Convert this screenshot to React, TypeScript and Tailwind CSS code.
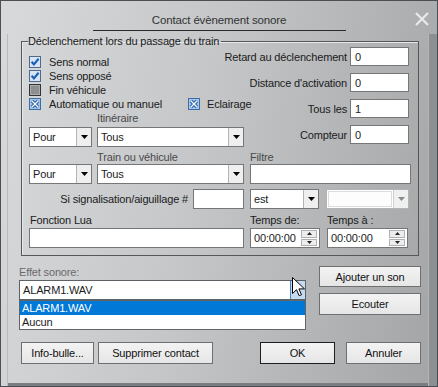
import clsx from "clsx";

function Arrow({ color = "#000" }: { color?: string }) {
  return (
    <svg width="7" height="4" viewBox="0 0 7 4">
      <path d="M0 0h7L3.5 4z" fill={color} />
    </svg>
  );
}

function Check({ kind }: { kind: "check" | "off" | "x" }) {
  if (kind === "check")
    return (
      <svg width="12" height="12" viewBox="0 0 12 12" className="shrink-0">
        <rect x="0.5" y="0.5" width="11" height="11" fill="#d6e4f4" stroke="#4f6a8a" />
        <path d="M2.6 5.8l2.3 2.6L9.6 2.8" stroke="#1a5fb4" strokeWidth="2.1" fill="none" />
      </svg>
    );
  if (kind === "off")
    return (
      <svg width="12" height="12" viewBox="0 0 12 12" className="shrink-0">
        <rect x="0.5" y="0.5" width="11" height="11" fill="#8d8f91" stroke="#333537" />
        <rect x="1.5" y="1.5" width="9" height="9" fill="none" stroke="#a9abad" />
      </svg>
    );
  return (
    <svg width="12" height="12" viewBox="0 0 12 12" className="shrink-0">
      <rect x="0.5" y="0.5" width="11" height="11" fill="#a9c6ea" stroke="#3b6da6" />
      <path d="M3 3l6 6M9 3l-6 6" stroke="#1d5ca8" strokeWidth="3.2" />
      <path d="M3 3l6 6M9 3l-6 6" stroke="#fff" strokeWidth="1.3" />
    </svg>
  );
}

function CheckRow({ kind, label }: { kind: "check" | "off" | "x"; label: string }) {
  return (
    <div className="flex items-center h-[14px]">
      <Check kind={kind} />
      <span className="ml-[8px] leading-[14px]">{label}</span>
    </div>
  );
}

function Combo({
  className,
  text,
  disabled,
}: {
  className: string;
  text?: string;
  disabled?: boolean;
}) {
  return (
    <div
      className={clsx(
        "flex h-full border bg-white",
        disabled ? "border-[#b3b3b3]" : "border-[#767676]",
        className
      )}
    >
      {disabled ? (
        <div className="flex-1 m-[1px] border border-[#dcdcdc] bg-[#fdfdfd]" />
      ) : (
        <div className="flex-1 pl-[3px] leading-[18px] truncate">{text}</div>
      )}
      <div
        className={clsx(
          "w-[15px] flex items-center justify-center border-l",
          disabled ? "border-[#d0d0d0] bg-[#f0f0f0]" : "border-[#b4b4b4] bg-[#efefef]"
        )}
      >
        <Arrow color={disabled ? "#8a8a8a" : "#000"} />
      </div>
    </div>
  );
}

function Field({ className, value }: { className: string; value?: string }) {
  return (
    <div className={clsx("h-full border border-[#767676] bg-white pl-[4px] leading-[18px]", className)}>
      {value}
    </div>
  );
}

function TimeField({ className }: { className: string }) {
  return (
    <div className={clsx("h-full flex border border-[#767676] bg-white", className)}>
      <div className="flex-1 pl-[3px] leading-[18px]">00:00:00</div>
      <div className="w-[16px] my-[1px] mr-[2px] flex flex-col gap-px">
        <div className="flex-1 flex items-center justify-center border border-[#b0b0b0] bg-[#ededed]">
          <svg width="5" height="3" viewBox="0 0 5 3">
            <path d="M0 3h5L2.5 0z" fill="#222" />
          </svg>
        </div>
        <div className="flex-1 flex items-center justify-center border border-[#b0b0b0] bg-[#ededed]">
          <svg width="5" height="3" viewBox="0 0 5 3">
            <path d="M0 0h5L2.5 3z" fill="#222" />
          </svg>
        </div>
      </div>
    </div>
  );
}

function Btn({ className, label }: { className: string; label: string }) {
  return (
    <button
      className={clsx(
        "border bg-[linear-gradient(#f3f3f3,#e6e6e6)] text-center leading-[18px] text-[#111]",
        className
      )}
    >
      {label}
    </button>
  );
}

function RightRow({ label, value }: { label: string; value: string }) {
  return (
    <div className="flex items-center justify-end gap-[3px] h-[19px] pr-[2px]">
      <span className="leading-[14px] whitespace-nowrap">{label}</span>
      <Field className="w-[59px]" value={value} />
    </div>
  );
}

export default function App() {
  return (
    <div className="w-[438px] h-[387px] flex flex-col border border-[#4b4e52] bg-[linear-gradient(100deg,#d7d9db_0%,#c4c6c8_45%,#a2a4a6_100%)] font-['Liberation_Sans',Arial,sans-serif] text-[11px] tracking-[-0.15px] text-[#1b1b1b] overflow-hidden">
      {/* Titre */}
      <div className="h-[33px] grid grid-cols-[1fr_auto_1fr]">
        <div />
        <div className="mt-[11px] w-[253px] h-[19px] border-b border-[#2b2b2b] text-center text-[11.5px] leading-[17px] text-[#333]">
          Contact évènement sonore
        </div>
        <div className="flex justify-end pt-[10px] pr-[7px]">
          <svg width="16" height="16" viewBox="0 0 16 16">
            <path d="M2 2l12 12M14 2L2 14" stroke="#e8e9ea" strokeWidth="2.2" />
          </svg>
        </div>
      </div>

      <div className="flex-1 flex">
        <div className="flex-1 flex flex-col ml-[6px] border-l border-[#b9bbbd]">
          {/* Groupe déclenchement */}
          <fieldset className="ml-[13px] w-[398px] border border-[#55585b] px-[7px] pb-[7px] shadow-[inset_1px_1px_0_#e6e8ea]">
            <legend className="-ml-px pr-[2px] leading-[14px]">Déclenchement lors du passage du train</legend>

            <div className="grid grid-cols-[181px_201px]">
              <div className="flex flex-col">
                <div className="mt-[7px] flex flex-col">
                  <CheckRow kind="check" label="Sens normal" />
                  <CheckRow kind="check" label="Sens opposé" />
                  <CheckRow kind="off" label="Fin véhicule" />
                  <div className="grid grid-cols-[159px_12px_max-content] items-center h-[14px] w-max whitespace-nowrap">
                    <div className="flex items-center">
                      <Check kind="x" />
                      <span className="ml-[8px] leading-[14px]">Automatique ou manuel</span>
                    </div>
                    <Check kind="x" />
                    <span className="ml-[7px] leading-[14px]">Eclairage</span>
                  </div>
                </div>
                <div className="h-[14px] pl-[68px] leading-[14px] text-[#4a4a4a]">Itinéraire</div>
                <div className="mt-[2px] h-[20px] w-[215px] grid grid-cols-[63px_147px] gap-[5px]">
                  <Combo className="" text="Pour" />
                  <Combo className="" text="Tous" />
                </div>
              </div>

              <div className="-mt-px flex flex-col gap-[7px]">
                <RightRow label="Retard au déclenchement" value="0" />
                <RightRow label="Distance d'activation" value="0" />
                <RightRow label="Tous les" value="1" />
                <RightRow label="Compteur" value="0" />
              </div>
            </div>

            <div className="mt-[3px] h-[14px] flex leading-[14px]">
              <div className="w-[221px] pl-[68px] text-[#4a4a4a]">Train ou véhicule</div>
              <div className="text-[#4a4a4a]">Filtre</div>
            </div>
            <div className="h-[20px] flex">
              <Combo className="w-[63px]" text="Pour" />
              <Combo className="w-[147px] ml-[5px]" text="Tous" />
              <Field className="w-[161px] ml-[6px]" />
            </div>

            <div className="mt-[5px] h-[20px] flex items-center">
              <div className="w-[159px] text-right leading-[14px] whitespace-nowrap">Si signalisation/aiguillage #</div>
              <Field className="w-[51px] ml-[5px]" />
              <Combo className="w-[69px] ml-[6px]" text="est" />
              <Combo className="w-[83px] ml-[7px]" disabled />
            </div>

            <div className="mt-[4px] h-[14px] flex leading-[14px]">
              <div className="w-[221px] pl-px">Fonction Lua</div>
              <div className="w-[77px]">Temps de:</div>
              <div>Temps à :</div>
            </div>
            <div className="mt-px h-[20px] flex">
              <Field className="w-[215px]" />
              <TimeField className="w-[70px] ml-[6px]" />
              <TimeField className="w-[81px] ml-[7px]" />
            </div>
          </fieldset>

          {/* Effet sonore */}
          <div className="flex ml-[11px]">
            <div className="w-[287px] flex flex-col">
              <div className="mt-[9px] h-[14px] leading-[14px] text-[#6a6a6a]">Effet sonore:</div>
              <div className="relative mt-px h-[20px] flex border border-[#5d6064] bg-white">
                <div className="flex-1 pl-[3px] leading-[18px]">ALARM1.WAV</div>
                <div className="w-[15px] border-l border-[#4a86c0] bg-[#c4daf0]" />
                <div className="absolute left-[-1px] right-[-1px] top-[19px] h-[30px] border border-[#646464] bg-white p-0 z-10">
                  <div className="h-[14px] bg-[#0078d7] pl-[2px] leading-[14px] text-white">ALARM1.WAV</div>
                  <div className="h-[14px] pl-[2px] leading-[14px]">Aucun</div>
                </div>
                <svg
                  width="13"
                  height="20"
                  viewBox="0 0 13 20"
                  className="absolute left-[272px] top-[-4px] z-20"
                >
                  <path
                    d="M0.5 0.5v16l4-3.8 2.7 6 2.3-1-2.6-5.8h5.6z"
                    fill="#fff"
                    stroke="#000"
                    strokeLinejoin="round"
                  />
                </svg>
              </div>
            </div>
            <div className="ml-[13px] w-[102px] flex flex-col">
              <Btn className="mt-[10px] h-[21px] border-[#6f6f6f]" label="Ajouter un son" />
              <Btn className="mt-[6px] h-[22px] border-[#6f6f6f]" label="Ecouter" />
            </div>
          </div>

          {/* Boutons */}
          <div className="mt-[27px] ml-[13px] flex h-[22px]">
            <Btn className="w-[73px] border-[#6f6f6f]" label="Info-bulle..." />
            <Btn className="w-[115px] ml-[4px] border-[#6f6f6f]" label="Supprimer contact" />
            <Btn className="w-[75px] ml-[47px] border-[#1e1e1e]" label="OK" />
            <Btn className="w-[75px] ml-[11px] border-[#6f6f6f]" label="Annuler" />
          </div>
          <div className="flex-1" />
          <div className="h-[3px] bg-[#7b7e81]" />
        </div>
        <div className="w-[9px] border-l border-[#b3b5b7] bg-[#8d9093]" />
      </div>
    </div>
  );
}
